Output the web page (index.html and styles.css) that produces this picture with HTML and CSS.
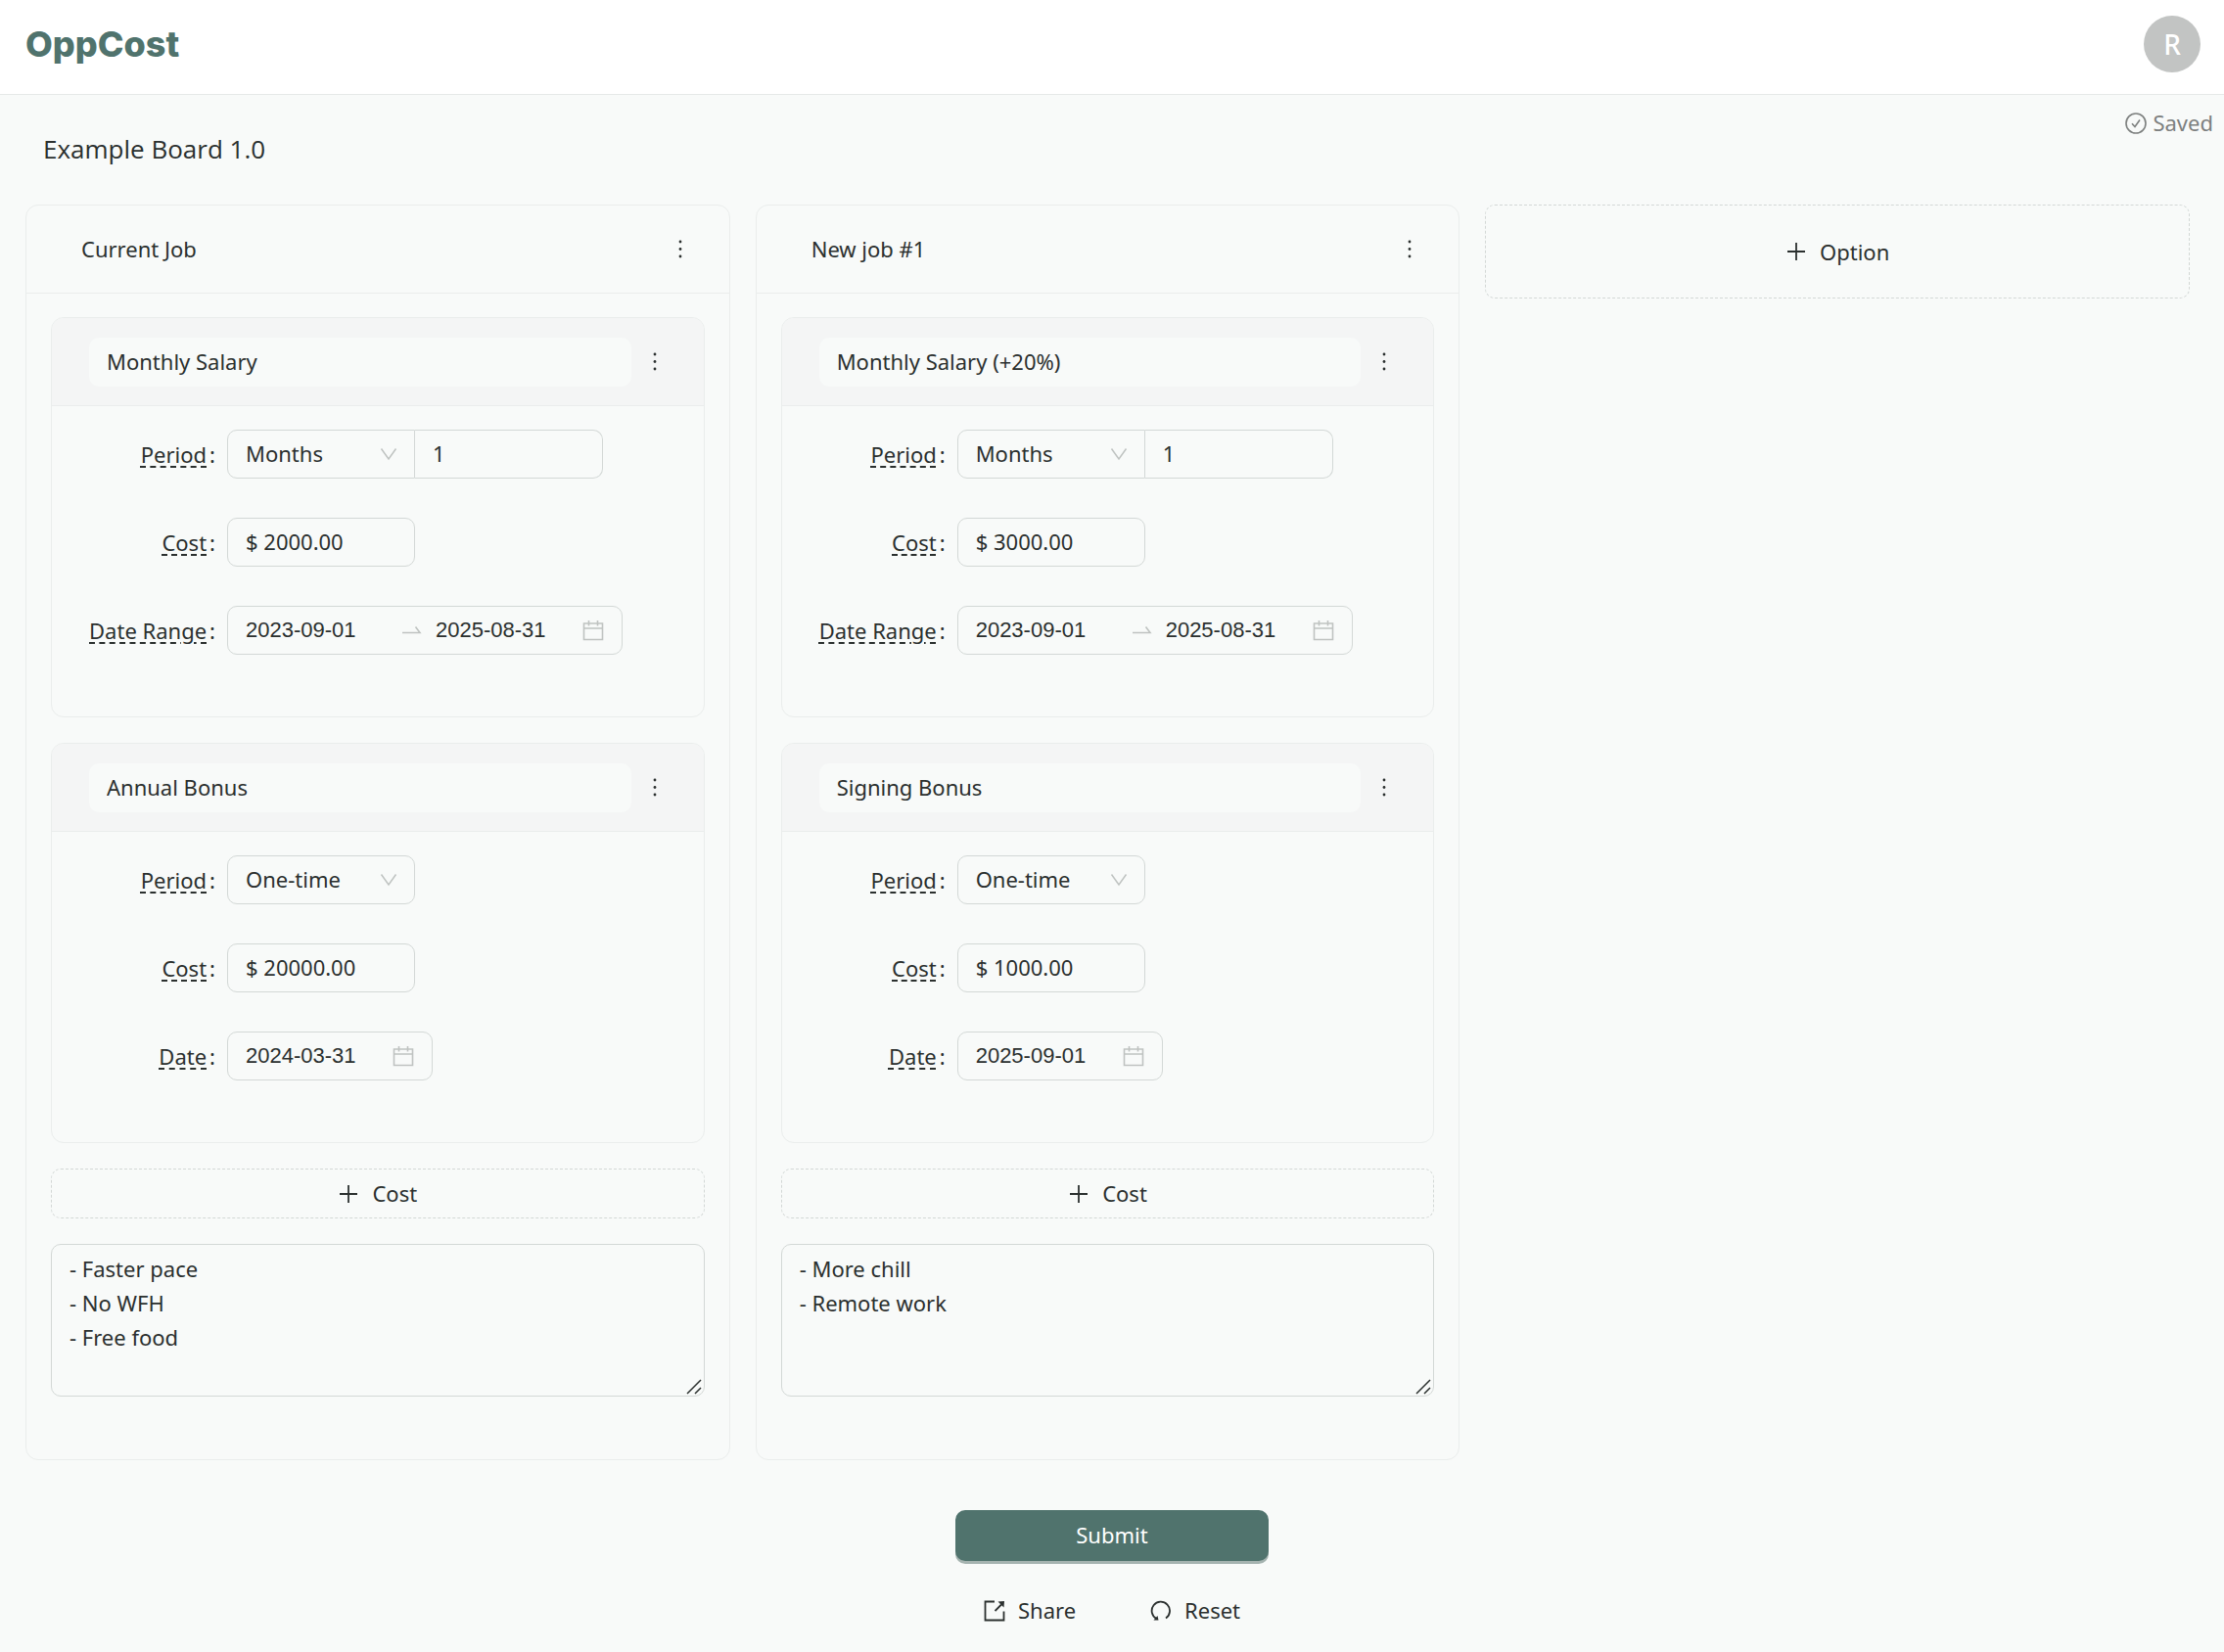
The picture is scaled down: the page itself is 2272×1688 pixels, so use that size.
FILE: index.html
```html
<!DOCTYPE html>
<html lang="en">
<head>
  <meta charset="UTF-8" />
  <meta name="viewport" content="width=device-width, initial-scale=1.0"/>
  <title>OppCost</title>
  <link rel="stylesheet" href="styles.css">
</head>
<body>

  <!-- Shared icons -->
  <svg class="sprite" aria-hidden="true">
    <symbol id="icon-dots" viewBox="0 0 22 22">
      <circle cx="12" cy="3" r="1.4" fill="currentColor"/>
      <circle cx="12" cy="10.500" r="1.4" fill="currentColor"/>
      <circle cx="12" cy="18" r="1.4" fill="currentColor"/>
    </symbol>
    <symbol id="icon-plus" viewBox="0 0 22 22">
      <path d="M11 2v18M2 11h18" stroke="currentColor" stroke-width="1.8" fill="none"/>
    </symbol>
    <symbol id="icon-down" viewBox="0 0 20 20">
      <path d="M2.5 4.5L10 15L17.5 4.5" stroke="currentColor" stroke-width="1.5" fill="none"/>
    </symbol>
    <symbol id="icon-calendar" viewBox="0 0 22 22">
      <path d="M1.5 4h19v16.5h-19zM1.5 9h19M6.5 1v5.5M15.500 1v5.5" stroke="currentColor" stroke-width="1.6" fill="none"/>
    </symbol>
    <symbol id="icon-swap" viewBox="0 0 22 22">
      <path d="M2 13.5h18L15.5 7.5" stroke="currentColor" stroke-width="1.6" fill="none"/>
    </symbol>
    <symbol id="icon-grip" viewBox="0 0 18 18">
      <path d="M1 16L15 2M9 16L15 10" stroke="currentColor" stroke-width="1.5" fill="none"/>
    </symbol>
  </svg>

  <!-- Header -->
  <header class="header">
    <a class="logo" href="index.html">OppCost</a>
    <button type="button" class="avatar">R</button>
  </header>

  <!-- Board -->
  <main>
    <div class="board-top">
      <input type="text" class="board-title" aria-label="Board name" value="Example Board 1.0" />
      <div class="saved">
        <svg class="icon" viewBox="0 0 22 22" fill="none" stroke="currentColor" stroke-width="1.6">
          <circle cx="11" cy="11" r="10"/>
          <path d="M7 11.2L10 14.5L15 7.5"/>
        </svg>
        <span>Saved</span>
      </div>
    </div>

    <div class="board">
      <section class="option">
        <div class="option-header">
          <input type="text" class="name" aria-label="Option name" value="Current Job" />
          <button type="button" class="menu-btn" aria-label="Option menu"><svg class="icon"><use href="#icon-dots"/></svg></button>
        </div>
        <div class="option-body">
          <article class="cost">
            <div class="cost-header">
              <input type="text" class="name" aria-label="Cost name" value="Monthly Salary" />
              <button type="button" class="menu-btn" aria-label="Cost menu"><svg class="icon"><use href="#icon-dots"/></svg></button>
            </div>
            <div class="cost-body">
              <div class="row">
                <label for="period-1"><span>Period</span></label>
                <div class="group">
                  <div class="select">
                    <select id="period-1"><option>Months</option><option>One-time</option></select>
                    <svg class="arrow"><use href="#icon-down"/></svg>
                  </div>
                  <input type="text" class="field" aria-label="Number of periods" value="1" />
                </div>
              </div>
              <div class="row">
                <label for="cost-1"><span>Cost</span></label>
                <input type="text" class="field" id="cost-1" value="$ 2000.00" />
              </div>
              <div class="row">
                <label for="date-1"><span>Date Range</span></label>
                <div class="picker">
                  <input type="text" id="date-1" value="2023-09-01" />
                  <svg class="icon swap"><use href="#icon-swap"/></svg>
                  <input type="text" aria-label="End date" value="2025-08-31" />
                  <svg class="icon"><use href="#icon-calendar"/></svg>
                </div>
              </div>
            </div>
          </article>

          <article class="cost">
            <div class="cost-header">
              <input type="text" class="name" aria-label="Cost name" value="Annual Bonus" />
              <button type="button" class="menu-btn" aria-label="Cost menu"><svg class="icon"><use href="#icon-dots"/></svg></button>
            </div>
            <div class="cost-body">
              <div class="row">
                <label for="period-2"><span>Period</span></label>
                <div class="select">
                  <select id="period-2"><option>One-time</option><option>Months</option></select>
                  <svg class="arrow"><use href="#icon-down"/></svg>
                </div>
              </div>
              <div class="row">
                <label for="cost-2"><span>Cost</span></label>
                <input type="text" class="field" id="cost-2" value="$ 20000.00" />
              </div>
              <div class="row">
                <label for="date-2"><span>Date</span></label>
                <div class="picker">
                  <input type="text" id="date-2" value="2024-03-31" />
                  <svg class="icon"><use href="#icon-calendar"/></svg>
                </div>
              </div>
            </div>
          </article>

          <button type="button" class="add-btn"><svg class="icon"><use href="#icon-plus"/></svg>Cost</button>
          <div class="notes">
            <textarea rows="4" aria-label="Notes">- Faster pace
- No WFH
- Free food</textarea>
            <svg class="grip"><use href="#icon-grip"/></svg>
          </div>
        </div>
      </section>

      <section class="option">
        <div class="option-header">
          <input type="text" class="name" aria-label="Option name" value="New job #1" />
          <button type="button" class="menu-btn" aria-label="Option menu"><svg class="icon"><use href="#icon-dots"/></svg></button>
        </div>
        <div class="option-body">
          <article class="cost">
            <div class="cost-header">
              <input type="text" class="name" aria-label="Cost name" value="Monthly Salary (+20%)" />
              <button type="button" class="menu-btn" aria-label="Cost menu"><svg class="icon"><use href="#icon-dots"/></svg></button>
            </div>
            <div class="cost-body">
              <div class="row">
                <label for="period-3"><span>Period</span></label>
                <div class="group">
                  <div class="select">
                    <select id="period-3"><option>Months</option><option>One-time</option></select>
                    <svg class="arrow"><use href="#icon-down"/></svg>
                  </div>
                  <input type="text" class="field" aria-label="Number of periods" value="1" />
                </div>
              </div>
              <div class="row">
                <label for="cost-3"><span>Cost</span></label>
                <input type="text" class="field" id="cost-3" value="$ 3000.00" />
              </div>
              <div class="row">
                <label for="date-3"><span>Date Range</span></label>
                <div class="picker">
                  <input type="text" id="date-3" value="2023-09-01" />
                  <svg class="icon swap"><use href="#icon-swap"/></svg>
                  <input type="text" aria-label="End date" value="2025-08-31" />
                  <svg class="icon"><use href="#icon-calendar"/></svg>
                </div>
              </div>
            </div>
          </article>

          <article class="cost">
            <div class="cost-header">
              <input type="text" class="name" aria-label="Cost name" value="Signing Bonus" />
              <button type="button" class="menu-btn" aria-label="Cost menu"><svg class="icon"><use href="#icon-dots"/></svg></button>
            </div>
            <div class="cost-body">
              <div class="row">
                <label for="period-4"><span>Period</span></label>
                <div class="select">
                  <select id="period-4"><option>One-time</option><option>Months</option></select>
                  <svg class="arrow"><use href="#icon-down"/></svg>
                </div>
              </div>
              <div class="row">
                <label for="cost-4"><span>Cost</span></label>
                <input type="text" class="field" id="cost-4" value="$ 1000.00" />
              </div>
              <div class="row">
                <label for="date-4"><span>Date</span></label>
                <div class="picker">
                  <input type="text" id="date-4" value="2025-09-01" />
                  <svg class="icon"><use href="#icon-calendar"/></svg>
                </div>
              </div>
            </div>
          </article>

          <button type="button" class="add-btn"><svg class="icon"><use href="#icon-plus"/></svg>Cost</button>
          <div class="notes">
            <textarea rows="4" aria-label="Notes">- More chill
- Remote work</textarea>
            <svg class="grip"><use href="#icon-grip"/></svg>
          </div>
        </div>
      </section>

      <button type="button" class="add-btn add-option"><svg class="icon"><use href="#icon-plus"/></svg>Option</button>
    </div>

    <!-- Board actions -->
    <div class="actions">
      <button type="submit" class="submit-btn">Submit</button>
      <div class="links">
        <button type="button" class="text-btn">
          <svg class="icon" viewBox="0 0 22 22" fill="none" stroke="currentColor" stroke-width="1.8">
            <path d="M11 1.5H1.5v19h19v-9M11.500 11L18 4.5"/>
            <path d="M14.5 1.5L21 1L20.5 7.5Z" fill="currentColor" stroke="none"/>
          </svg>
          Share
        </button>
        <button type="button" class="text-btn">
          <svg class="icon" viewBox="0 0 22 22" fill="none" stroke="currentColor" stroke-width="1.8">
            <path d="M6.500 19A9.200 9.200 0 1 1 16 18.500"/>
            <path d="M3.500 20.500L8.500 20.500L7.500 16Z" fill="currentColor" stroke="none"/>
          </svg>
          Reset
        </button>
      </div>
    </div>
  </main>

</body>
</html>
```
FILE: styles.css
```css
* {
  margin: 0;
  padding: 0;
  box-sizing: border-box;
}

body {
  background-color: #f8faf9;
  color: #2b302f;
  font-family: 'Noto Sans', 'Open Sans', sans-serif;
  font-size: 22px;
  line-height: 35px;
}

input,
select,
textarea,
button {
  font: inherit;
  color: inherit;
  background: none;
  border: none;
  outline: none;
}

button {
  cursor: pointer;
}

.sprite {
  display: none;
}

.icon {
  width: 22px;
  height: 22px;
  flex: none;
}

/* Header */
.header {
  display: flex;
  align-items: center;
  justify-content: space-between;
  height: 97px;
  padding: 0 24px 6px 26px;
  background-color: #fff;
  border-bottom: 1px solid #e6e9e8;
}

.logo {
  color: #50736d;
  font-family: Inter, sans-serif;
  font-size: 36px;
  font-weight: 800;
  text-decoration: none;
}

.avatar {
  width: 58px;
  height: 58px;
  border-radius: 50%;
  background-color: #c2c4c3;
  color: #fff;
  font-size: 28px;
  font-weight: 500;
}

/* Board title and save state */
.board-top {
  display: flex;
  justify-content: space-between;
  padding: 11px 11px 32px 26px;
}

.board-title {
  flex: 1;
  height: 50px;
  margin-top: 19px;
  padding: 0 18px;
  font-family: 'Open Sans', sans-serif;
  font-size: 26px;
}

.saved {
  display: flex;
  align-items: center;
  gap: 6px;
  height: 35px;
  color: #7d807f;
}

/* Options */
.board {
  display: grid;
  grid-template-columns: repeat(3, 1fr);
  gap: 26px;
  align-items: start;
  padding: 0 35px 0 26px;
}

.option,
.cost {
  border: 1px solid #eaedec;
  border-radius: 13px;
}

.option-header,
.cost-header {
  display: flex;
  align-items: center;
  gap: 12px;
  height: 90px;
  padding: 0 38px;
  border-bottom: 1px solid #eaedec;
}

.cost-header {
  background-color: #f4f5f5;
  border-radius: 12px 12px 0 0;
}

.name {
  flex: 1;
  min-width: 0;
  height: 50px;
  padding: 0 18px 2px;
  border-radius: 10px;
  background-color: #f8faf9;
}

.option-body {
  display: flex;
  flex-direction: column;
  gap: 26px;
  padding: 24px 25px 64px;
}

.menu-btn {
  display: flex;
  width: 24px;
}

/* Cost form */
.cost-body {
  display: flex;
  flex-direction: column;
  gap: 40px;
  padding: 24px 24px 63px;
}

.row {
  display: flex;
  align-items: center;
  gap: 12px;
  height: 50px;
}

.row label {
  width: 143px;
  text-align: right;
  white-space: nowrap;
}

.row label span {
  text-decoration: underline dashed 2px;
  text-underline-offset: 4px;
}

.row label::after {
  content: ":";
  margin-left: 3px;
}

.group {
  display: flex;
}

.select {
  position: relative;
  width: 192px;
}

.select select,
.field,
.picker {
  height: 50px;
  border: 1px solid #d3d8d6;
  border-radius: 10px;
}

.select select {
  display: block;
  width: 100%;
  padding: 0 18px 2px;
  appearance: none;
}

.arrow {
  position: absolute;
  top: 15px;
  right: 17px;
  width: 20px;
  height: 20px;
  color: #bfc3c1;
  pointer-events: none;
}

.field {
  width: 192px;
  padding: 0 18px 2px;
}

.group select {
  border-radius: 10px 0 0 10px;
}

.group .field {
  border-left: none;
  border-radius: 0 10px 10px 0;
}

.picker {
  display: flex;
  align-items: center;
  padding: 0 18px;
  color: #bfc3c1;
}

.picker input {
  width: 150px;
  padding-bottom: 2px;
  color: #2b302f;
  font-family: 'Liberation Sans', Arial, sans-serif;
}

.picker .swap {
  margin: 0 14px 0 8px;
}

/* Buttons and notes */
.add-btn {
  display: flex;
  align-items: center;
  justify-content: center;
  gap: 13px;
  height: 51px;
  border: 1px dashed #d3d8d6;
  border-radius: 10px;
}

.add-option {
  height: 96px;
}

.notes {
  position: relative;
  display: flex;
}

.notes textarea {
  width: 100%;
  padding: 7px 18px;
  border: 1px solid #d3d8d6;
  border-radius: 10px;
  resize: vertical;
}

.notes textarea::-webkit-resizer {
  display: none;
}

.grip {
  position: absolute;
  right: 1px;
  bottom: 1px;
  width: 18px;
  height: 18px;
  pointer-events: none;
}

.actions {
  display: flex;
  flex-direction: column;
  align-items: center;
  gap: 25px;
  padding: 51px 0 17px;
}

.submit-btn {
  width: 320px;
  height: 52px;
  padding-bottom: 2px;
  border-radius: 10px;
  background-color: #50736d;
  box-shadow: 0 3px 0 #a5b3b0;
  color: #fff;
}

.links {
  display: flex;
  gap: 38px;
}

.text-btn {
  display: flex;
  align-items: center;
  gap: 13px;
  height: 51px;
  padding: 0 19px;
}
```
